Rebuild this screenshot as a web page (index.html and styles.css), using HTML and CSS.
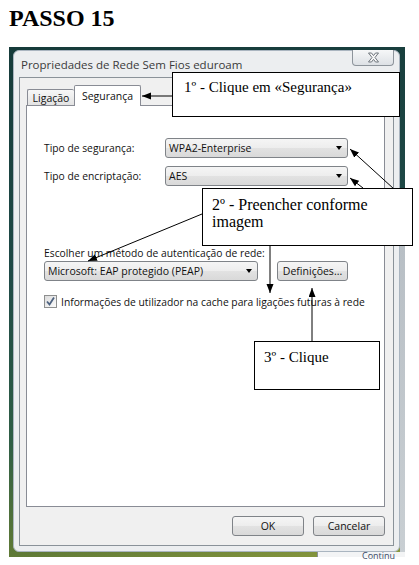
FILE: index.html
```html
<!DOCTYPE html>
<html lang="pt">
<head>
    <meta charset="UTF-8">
    <meta name="viewport" content="width=device-width, initial-scale=1.0">
    <title>Passo 15</title>
    <link rel="stylesheet" href="styles.css">
</head>
<body>
    <div class="page">
        <h1 class="step">PASSO 15</h1>

        <div class="shot">
            <div class="window">
                <div class="titlebar">
                    <span class="title">Propriedades de Rede Sem Fios eduroam</span>
                    <div class="close">
                        <svg width="13" height="11" viewBox="0 0 13 11">
                            <polygon points="1.5,1 4.5,1 6.5,3.6 8.5,1 11.5,1 8,5.5 11.5,10 8.5,10 6.5,7.4 4.5,10 1.5,10 5,5.5" fill="#f7f7f7" stroke="#6f767d" stroke-width="1"/>
                        </svg>
                    </div>
                </div>

                <div class="client">
                    <div class="tabs">
                        <div class="tab">Ligação</div>
                        <div class="tab active">Segurança</div>
                    </div>

                    <div class="panel">
                        <div class="fields">
                            <span class="label">Tipo de segurança:</span>
                            <div class="combo">WPA2-Enterprise<span class="caret"></span></div>
                            <span class="label">Tipo de encriptação:</span>
                            <div class="combo">AES<span class="caret"></span></div>
                        </div>

                        <div class="method">
                            <div class="method-label">Escolher um método de autenticação de rede:</div>
                            <div class="method-row">
                                <div class="combo wide">Microsoft: EAP protegido (PEAP)<span class="caret"></span></div>
                                <div class="btn settings">Definições...</div>
                            </div>
                            <div class="check-row">
                                <span class="checkbox">
                                    <svg width="11" height="11" viewBox="0 0 11 11">
                                        <path d="M2 5.5 L4.5 8.5 L9 1.5" fill="none" stroke="#4d6280" stroke-width="1.8"/>
                                    </svg>
                                </span>
                                Informações de utilizador na cache para ligações futuras à rede
                            </div>
                        </div>
                    </div>

                    <div class="actions">
                        <div class="btn">OK</div>
                        <div class="btn">Cancelar</div>
                    </div>
                </div>
            </div>
            <div class="desk-note">Continu</div>
        </div>

        <!-- arrows of the callouts -->
        <svg class="arrows" width="419" height="565" viewBox="0 0 419 565">
            <defs>
                <marker id="head" markerUnits="userSpaceOnUse" markerWidth="10" markerHeight="8" refX="9" refY="3.5" orient="auto">
                    <path d="M0,0 L9,3.5 L0,7 z" fill="#000"/>
                </marker>
            </defs>
            <g stroke="#000" stroke-width="1">
                <line x1="172" y1="96" x2="142" y2="96" marker-end="url(#head)"/>
                <line x1="394" y1="189" x2="350" y2="149" marker-end="url(#head)"/>
                <line x1="363" y1="188" x2="350" y2="178" marker-end="url(#head)"/>
                <line x1="202" y1="214" x2="88" y2="261" marker-end="url(#head)"/>
                <line x1="270" y1="246" x2="270" y2="293" marker-end="url(#head)"/>
                <line x1="312" y1="341" x2="312" y2="288" marker-end="url(#head)"/>
            </g>
        </svg>

        <div class="callout c1">1º - Clique em «Segurança»</div>
        <div class="callout c2">2º - Preencher conforme<br>imagem</div>
        <div class="callout c3">3º - Clique</div>
    </div>
</body>
</html>
```

FILE: styles.css
```css
* {
    box-sizing: border-box;
}

body {
    margin: 0;
    background-color: #fff;
    font-family: "Open Sans", "Noto Sans", sans-serif;
    color: #111;
}

.page {
    position: relative;
    width: 419px;
    height: 565px;
    padding-top: 5px;
    overflow: hidden;
}

.step {
    margin: 0 0 0 9px;
    font: bold 24px/27px "Liberation Serif", serif;
    color: #000;
}

/* the pasted screenshot */
.shot {
    position: relative;
    margin: 15px 0 0 9px;
    width: 396px;
    height: 510px;
    padding: 3px 5px 5px 4px;
    background:
        linear-gradient(#b7bec4, #c9cfd3) right 0 bottom 0 / 5px 330px no-repeat,
        linear-gradient(172deg, #163b3a 0%, #1f4a47 40%, #2f5e45 70%, #5f7a36 90%, #8e9c3e 100%);
}

.window {
    position: relative;
    height: 100%;
    display: flex;
    flex-direction: column;
    background-color: #eceef0;
    border: 1px solid #aab5c0;
    border-radius: 6px;
}

.titlebar {
    height: 26px;
    display: flex;
    align-items: center;
    padding-left: 7px;
}

.title {
    font-size: 11.5px;
    color: #3a3a3a;
}

.close {
    position: absolute;
    top: -1px;
    right: 5px;
    width: 42px;
    height: 16px;
    display: flex;
    align-items: center;
    justify-content: center;
    border: 1px solid #8d949b;
    border-top: none;
    border-radius: 0 0 4px 4px;
    background: linear-gradient(#f6f7f8, #dde1e5);
}

.client {
    flex: 1;
    display: flex;
    flex-direction: column;
    margin: 0 5px 5px;
    padding: 7px 8px 0 6px;
    background-color: #f0f0f0;
    border: 1px solid #8a9299;
}

.tabs {
    display: flex;
    align-items: flex-end;
    height: 20px;
    padding-left: 1px;
}

.tab {
    width: 47px;
    height: 16px;
    display: flex;
    align-items: center;
    justify-content: center;
    font-size: 10.5px;
    border: 1px solid #898c95;
    border-bottom: none;
    border-right: none;
    border-radius: 2px 2px 0 0;
    background: linear-gradient(#f7f7f7, #e3e3e3);
}

.tab.active {
    position: relative;
    width: 67px;
    height: 21px;
    margin-bottom: -1px;
    padding-bottom: 1px;
    border-right: 1px solid #898c95;
    background: #fff;
}

.panel {
    height: 402px;
    padding: 32px 0 0 17px;
    background-color: #fff;
    border: 1px solid #898c95;
    font-size: 10.3px;
}

.fields {
    display: grid;
    grid-template-columns: 121px 183px;
    row-gap: 8px;
    align-items: center;
}

.combo {
    height: 20px;
    display: flex;
    align-items: center;
    justify-content: space-between;
    padding: 0 5px 0 3px;
    font-size: 10.5px;
    border: 1px solid #7f8388;
    border-radius: 3px;
    background: linear-gradient(#f5f5f5 0%, #ededed 50%, #e2e2e2 51%, #d9d9d9 100%);
}

.combo.wide {
    width: 214px;
}

.caret {
    width: 0;
    height: 0;
    border-left: 3.5px solid transparent;
    border-right: 3.5px solid transparent;
    border-top: 4px solid #000;
}

.method {
    margin-top: 60px;
}

.method-label {
    line-height: 15px;
}

.method-row {
    display: flex;
    gap: 19px;
}

.btn {
    width: 72px;
    height: 20px;
    display: flex;
    align-items: center;
    justify-content: center;
    font-size: 10.5px;
    border: 1px solid #7f8388;
    border-radius: 3px;
    background: linear-gradient(#f5f5f5 0%, #ededed 50%, #e2e2e2 51%, #d9d9d9 100%);
}

.btn.settings {
    width: 71px;
}

.check-row {
    display: flex;
    align-items: center;
    gap: 4px;
    margin-top: 14px;
    height: 13px;
}

.checkbox {
    width: 13px;
    height: 13px;
    display: flex;
    align-items: center;
    justify-content: center;
    border: 1px solid #8e8f8f;
    background: linear-gradient(135deg, #dcdcdc, #fbfbfb);
}

.actions {
    display: flex;
    justify-content: flex-end;
    gap: 9px;
    margin-top: 9px;
}

.desk-note {
    position: absolute;
    right: 0;
    top: 505px;
    width: 88px;
    height: 5px;
    padding-left: 44px;
    font-size: 9px;
    line-height: 8px;
    color: #3b4a66;
    background-color: #f3f4f5;
    border-left: 1px solid #8a9096;
}

/* callouts */
.arrows {
    position: absolute;
    left: 0;
    top: 0;
}

.callout {
    position: absolute;
    background-color: #fff;
    border: 1px solid #000;
    font-family: "Liberation Serif", serif;
    font-size: 15px;
    line-height: 17px;
    color: #000;
}

.c1 {
    left: 172px;
    top: 72px;
    width: 228px;
    height: 45px;
    padding: 6px 0 0 11px;
}

.c2 {
    left: 202px;
    top: 188px;
    width: 211px;
    height: 58px;
    padding: 7px 0 0 9px;
    font-size: 16px;
}

.c3 {
    left: 254px;
    top: 341px;
    width: 126px;
    height: 49px;
    padding: 7px 0 0 9px;
}
```
